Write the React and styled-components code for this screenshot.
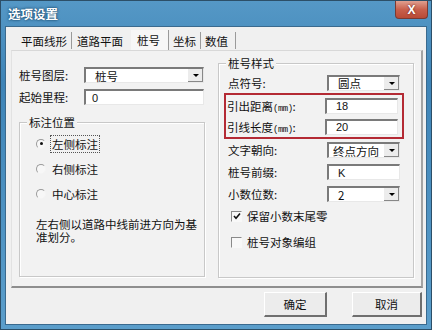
import React from "react";
import styled, { createGlobalStyle } from "styled-components";

const Global = createGlobalStyle`
  html, body { margin: 0; padding: 0; background: #3f86b8; }
  body { font-family: "Noto Sans CJK SC", "Liberation Sans", sans-serif; font-size: 11.5px; color: #111; }
`;

const Win = styled.div`
  width: 432px;
  height: 330px;
  box-sizing: border-box;
  border: 1px solid #2c4f68;
  background: linear-gradient(180deg, #5598c6 0%, #3e84b7 25%, #5b9ecb 100%);
  display: flex;
  flex-direction: column;
  padding: 0 4px 4px 4px;
`;

const TitleBar = styled.div`
  height: 25px;
  flex: none;
  display: flex;
  align-items: center;
  justify-content: space-between;
  padding-left: 3px;
`;

const Title = styled.span`
  color: #fff;
  font-weight: bold;
  font-size: 12.5px;
  text-shadow: 0 0 3px #1d4d70, 0 0 2px #1d4d70;
`;

const CloseBtn = styled.div`
  width: 31px;
  height: 17px;
  margin-top: -7px;
  margin-right: -1px;
  border: 1px solid #7a3a32;
  border-top: none;
  border-radius: 0 0 4px 4px;
  background: linear-gradient(180deg, #e0a090 0%, #c8604c 50%, #b84a36 100%);
  color: #fff;
  font-weight: bold;
  font-size: 12px;
  display: flex;
  align-items: center;
  justify-content: center;
  font-family: "Liberation Sans", sans-serif;
  text-shadow: 0 0 2px #5a1810;
`;

const Body = styled.div`
  flex: 1;
  background: #f0f0f0;
  border: 1px solid #3a6a8e;
  display: flex;
  flex-direction: column;
  padding: 3px 3px 0 5px;
`;

const Tabs = styled.div`
  display: flex;
  align-items: flex-end;
  height: 20px;
  padding-left: 6px;
`;

const Tab = styled.div`
  height: ${(p) => (p.$active ? "20px" : "17px")};
  padding: 0 ${(p) => p.$pr || 4}px 0 ${(p) => p.$pl || 4}px;
  display: flex;
  align-items: center;
  background: ${(p) => (p.$active ? "#f7f7f7" : "transparent")};
  border-right: ${(p) => (p.$sep ? "1px solid #9a9a9a" : "none")};
  margin-bottom: ${(p) => (p.$active ? "0" : "1px")};
`;

const Panel = styled.div`
  height: 238px;
  border-top: 1px solid #d8d8d8;
  border-left: 1px solid #e2e2e2;
  border-right: 2px solid #a4a4a4;
  border-bottom: 2px solid #8e8e8e;
  background: #f2f2f2;
  display: grid;
  grid-template-columns: 186px 196px;
  column-gap: 13px;
  padding: 6px 0 0 7px;
  box-sizing: border-box;
`;

const Col = styled.div`
  display: flex;
  flex-direction: column;
`;

const FieldRow = styled.div`
  display: flex;
  align-items: center;
  height: ${(p) => p.$h || 22}px;
  margin-top: ${(p) => p.$mt || 0}px;
`;

const Label = styled.span`
  width: ${(p) => p.$w || 64}px;
  flex: none;
  white-space: nowrap;
`;

const Mm = styled.span`
  font-family: "Liberation Mono", monospace;
  font-size: 9px;
  letter-spacing: -0.5px;
`;

const InputBox = styled.div`
  width: ${(p) => p.$w}px;
  height: 16px;
  box-sizing: border-box;
  border-top: 2px solid #7a7a7a;
  border-left: 2px solid #7a7a7a;
  border-right: 1px solid #e8e8e8;
  border-bottom: 1px solid #e8e8e8;
  background: #fff;
  display: flex;
  align-items: center;
  padding-left: ${(p) => p.$pl || 8}px;
  font-size: 11px;
  font-family: "Liberation Sans", "Noto Sans CJK SC", sans-serif;
  position: relative;
`;

const CnText = styled.span`
  font-family: "Noto Sans CJK SC", sans-serif;
  font-size: 11.5px;
`;

const Arrow = styled.div`
  position: absolute;
  right: 0;
  top: 0;
  bottom: 0;
  width: 15px;
  background: #ececec;
  border-left: 1px solid #fff;
  box-shadow: inset -1px -1px 0 #888;
  display: flex;
  align-items: center;
  justify-content: center;
  &::after {
    content: "";
    border-left: 3px solid transparent;
    border-right: 3px solid transparent;
    border-top: 3px solid #000;
  }
`;

const Group = styled.div`
  position: relative;
  border: 1px solid #c8c8c8;
  box-shadow: 1px 1px 0 #fff inset, 1px 1px 0 #fff;
  margin-top: ${(p) => p.$mt || 0}px;
  height: ${(p) => p.$h}px;
  box-sizing: border-box;
  padding: ${(p) => p.$pad};
  display: flex;
  flex-direction: column;
`;

const Legend = styled.span`
  position: absolute;
  top: -9px;
  left: 7px;
  padding: 0 2px;
  background: #f2f2f2;
`;

const RadioRow = styled.div`
  display: flex;
  align-items: center;
  height: 25px;
  gap: 5px;
`;

const Radio = styled.span`
  width: 10px;
  height: 10px;
  border-radius: 50%;
  box-sizing: border-box;
  border: 1px solid #9a9a9a;
  border-right-color: #f4f4f4;
  border-bottom-color: #f4f4f4;
  background: #f7f7f7;
  display: flex;
  align-items: center;
  justify-content: center;
  &::after {
    content: "";
    width: 3px;
    height: 3px;
    border-radius: 50%;
    background: ${(p) => (p.$on ? "#111" : "transparent")};
  }
`;

const RadioText = styled.span`
  padding: 0 1px;
  outline: ${(p) => (p.$focus ? "1px dotted #555" : "none")};
`;

const Note = styled.div`
  margin-top: 12px;
  line-height: 13px;
  width: 166px;
`;

const RedBox = styled.div`
  border: 2px solid #b42a34;
  margin: 0 9px 0 -4px;
  padding: 0 1px 0 1px;
  display: flex;
  flex-direction: column;
`;

const CheckRow = styled.div`
  display: flex;
  align-items: center;
  height: 22px;
  margin-top: ${(p) => p.$mt || 0}px;
  padding-left: 3px;
  gap: 5px;
`;

const Check = styled.span`
  width: 11px;
  height: 11px;
  box-sizing: border-box;
  border-top: 1px solid #8a8a8a;
  border-left: 1px solid #8a8a8a;
  border-right: 1px solid #f8f8f8;
  border-bottom: 1px solid #f8f8f8;
  background: #f8f8f8;
  display: flex;
  align-items: center;
  justify-content: center;
`;

const Footer = styled.div`
  flex: 1;
  display: flex;
  justify-content: flex-end;
  align-items: flex-start;
  gap: 25px;
  padding: 4px 1px 0 0;
`;

const Button = styled.div`
  height: 25px;
  box-sizing: border-box;
  border-top: 1px solid #fff;
  border-left: 1px solid #fff;
  border-right: 2px solid #6f6f6f;
  border-bottom: 2px solid #6f6f6f;
  background: #ececec;
  display: flex;
  align-items: center;
  justify-content: center;
  width: ${(p) => p.$w}px;
`;

function Select({ w, children, pl }) {
  return (
    <InputBox $w={w} $pl={pl}>
      <CnText>{children}</CnText>
      <Arrow />
    </InputBox>
  );
}

export default function App() {
  return (
    <>
      <Global />
      <Win>
        <TitleBar>
          <Title>选项设置</Title>
          <CloseBtn>X</CloseBtn>
        </TitleBar>
        <Body>
          <Tabs>
            <Tab $sep $pl={0} $pr={4}>平面线形</Tab>
            <Tab $pl={5} $pr={8}>道路平面</Tab>
            <Tab $active $sep $pl={6} $pr={8}>桩号</Tab>
            <Tab $sep>坐标</Tab>
            <Tab $sep $pr={7}>数值</Tab>
          </Tabs>
          <Panel>
            <Col>
              <FieldRow $mt={7}>
                <Label $w={65}>桩号图层:</Label>
                <Select w={120} pl={9}>桩号</Select>
              </FieldRow>
              <FieldRow>
                <Label $w={65}>起始里程:</Label>
                <InputBox $w={120} $pl={6}>0</InputBox>
              </FieldRow>
              <Group $mt={14} $h={155} $pad="8px 0 0 16px">
                <Legend>标注位置</Legend>
                <RadioRow>
                  <Radio $on />
                  <RadioText $focus>左侧标注</RadioText>
                </RadioRow>
                <RadioRow>
                  <Radio />
                  <RadioText>右侧标注</RadioText>
                </RadioRow>
                <RadioRow>
                  <Radio />
                  <RadioText>中心标注</RadioText>
                </RadioRow>
                <Note>左右侧以道路中线前进方向为基准划分。</Note>
              </Group>
            </Col>
            <Col>
              <Group $mt={6} $h={215} $pad="8px 0 0 9px">
                <Legend>桩号样式</Legend>
                <FieldRow $h={21}>
                  <Label $w={99}>点符号:</Label>
                  <Select w={73} pl={9}>圆点</Select>
                </FieldRow>
                <RedBox>
                  <FieldRow $h={21}>
                    <Label $w={98}>引出距离<Mm>(mm)</Mm>:</Label>
                    <InputBox $w={73} $pl={9}>18</InputBox>
                  </FieldRow>
                  <FieldRow $h={21}>
                    <Label $w={98}>引线长度<Mm>(mm)</Mm>:</Label>
                    <InputBox $w={73} $pl={9}>20</InputBox>
                  </FieldRow>
                </RedBox>
                <FieldRow>
                  <Label $w={99}>文字朝向:</Label>
                  <Select w={73} pl={4}>终点方向</Select>
                </FieldRow>
                <FieldRow>
                  <Label $w={99}>桩号前缀:</Label>
                  <InputBox $w={73} $pl={9}>K</InputBox>
                </FieldRow>
                <FieldRow>
                  <Label $w={99}>小数位数:</Label>
                  <Select w={73} pl={9}>2</Select>
                </FieldRow>
                <CheckRow>
                  <Check>
                    <svg width="8" height="8" viewBox="0 0 8 8">
                      <path d="M1 4 L3 6.2 L7 1.5" stroke="#111" strokeWidth="1.6" fill="none" />
                    </svg>
                  </Check>
                  <span>保留小数末尾零</span>
                </CheckRow>
                <CheckRow $mt={4}>
                  <Check />
                  <span>桩号对象编组</span>
                </CheckRow>
              </Group>
            </Col>
          </Panel>
          <Footer>
            <Button $w={63}>确定</Button>
            <Button $w={70}>取消</Button>
          </Footer>
        </Body>
      </Win>
    </>
  );
}
